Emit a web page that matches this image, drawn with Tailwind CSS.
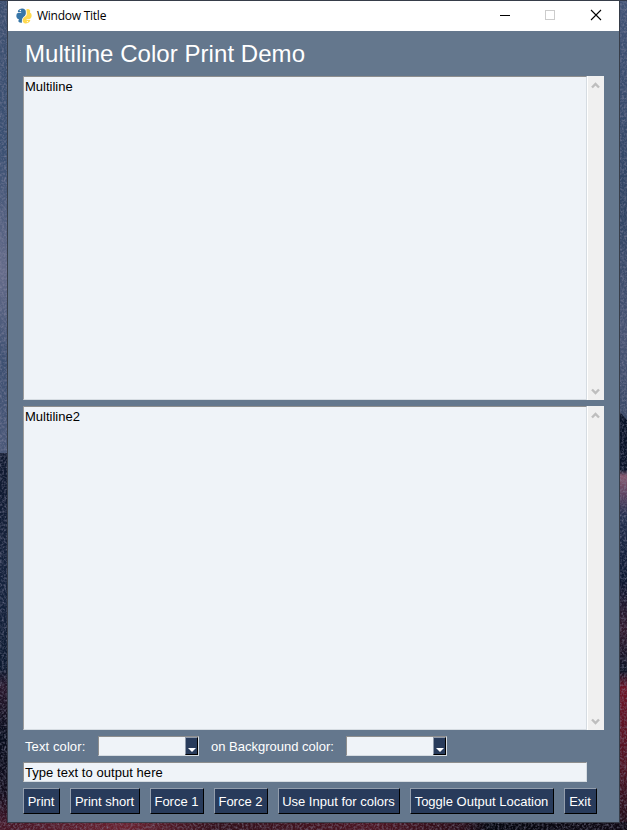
<!DOCTYPE html>
<html lang="en">
<head>
<meta charset="utf-8">
<title>Window Title</title>
<script src="https://cdn.jsdelivr.net/npm/@tailwindcss/browser@4"></script>
</head>
<body class="relative w-[627px] h-[830px] overflow-hidden bg-[#0b1428] font-['Liberation_Sans',Arial,sans-serif] text-[13px] leading-[16px]">
<!-- desktop wallpaper -->
<svg class="absolute inset-0" width="627" height="830" aria-hidden="true">
  <defs>
    <linearGradient id="sky" x1="0" y1="0" x2="0" y2="1"><stop offset="0" stop-color="#3d5070"/><stop offset=".33" stop-color="#3a5072"/><stop offset=".6" stop-color="#656c8a"/><stop offset=".8" stop-color="#3d5071"/><stop offset="1" stop-color="#4b5979"/></linearGradient>
    <linearGradient id="skyr" x1="0" y1="0" x2="0" y2="1"><stop offset="0" stop-color="#425476"/><stop offset=".5" stop-color="#304463"/><stop offset=".8" stop-color="#485473"/><stop offset="1" stop-color="#3a4a68"/></linearGradient>
    <linearGradient id="land" x1="0" y1="0" x2="0" y2="1"><stop offset="0" stop-color="#0e182e"/><stop offset=".35" stop-color="#16243e"/><stop offset=".57" stop-color="#0c1a30"/><stop offset=".62" stop-color="#27162a"/><stop offset=".75" stop-color="#070d1c"/><stop offset=".9" stop-color="#120d1c"/><stop offset="1" stop-color="#4a1628"/></linearGradient>
    <linearGradient id="landr" x1="0" y1="0" x2="0" y2="1"><stop offset="0" stop-color="#081226"/><stop offset=".14" stop-color="#0a142a"/><stop offset=".155" stop-color="#85566c"/><stop offset=".2" stop-color="#5c4260"/><stop offset=".25" stop-color="#24304f"/><stop offset=".4" stop-color="#0c1730"/><stop offset=".52" stop-color="#341b2e"/><stop offset=".62" stop-color="#0c1224"/><stop offset=".66" stop-color="#6d1426"/><stop offset=".85" stop-color="#501423"/><stop offset="1" stop-color="#1c0c18"/></linearGradient>
    <linearGradient id="ground" x1="0" y1="0" x2="1" y2="0"><stop offset="0" stop-color="#451524"/><stop offset=".2" stop-color="#6a2230"/><stop offset=".35" stop-color="#32101b"/><stop offset=".6" stop-color="#4d1522"/><stop offset=".74" stop-color="#280c17"/><stop offset=".78" stop-color="#04070f"/><stop offset="1" stop-color="#0e0813"/></linearGradient>
    <filter id="grain" x="0" y="0" width="1" height="1" color-interpolation-filters="sRGB"><feTurbulence type="fractalNoise" baseFrequency=".45" numOctaves="2" seed="4"/><feColorMatrix values="0 0 0 0 .55  0 0 0 0 .55  0 0 0 0 .65  1.2 0 0 0 -.48"/></filter>
  </defs>
  <rect width="8" height="453" fill="url(#sky)"/>
  <rect x="619" width="8" height="420" fill="url(#skyr)"/>
  <rect y="453" width="8" height="377" fill="url(#land)"/>
  <path d="M619 411l8 9v410h-8z" fill="url(#landr)"/>
  <rect y="822" width="627" height="8" fill="url(#ground)"/>
  <rect width="627" height="830" filter="url(#grain)"/>
  <rect width="627" height="1" fill="#30384a"/>
  <path d="M130 0h40M358 0h35" stroke="#6b6455" stroke-width="2"/>
</svg>

<main class="relative ml-[7px] w-[613px] h-[823px] border border-[#363d49] bg-[#64778d] flex flex-col">
  <header class="h-[30px] shrink-0 bg-white flex items-center pl-2">
    <svg width="16" height="16" viewBox="0 0 16 16" aria-hidden="true">
      <path d="M2.2 2.2Q4 .3 6.2.4Q9.600.6 9.800 3.500V6Q9.300 7.800 7.500 9Q6 10.200 5.900 12.500V14.800Q3.500 15 2.200 13.200L3 11.300Q.6 11 .3 8Q.2 5.400 2.200 4.800H5.200V4H1.800z" fill="#3776a8"/>
      <path d="M10.400 1.200Q13 .6 14.200 2.500L14 4.600Q15.800 5.400 15.700 8Q15.400 10.500 13.400 11.200H10.600V12H14.400L13.600 13.800Q12 15.600 9.600 15.500Q6.700 15.200 6.700 12.500Q6.700 10.400 8.300 9.300L10 8Q11 7 10.800 5.400z" fill="#ffd94f"/>
      <circle cx="4.400" cy="2.500" r=".75" fill="#fff"/><circle cx="11.400" cy="13.600" r=".7" fill="#fff"/>
    </svg>
    <h1 class="ml-[5px] font-['Open_Sans','Noto_Sans',sans-serif] text-[12px] leading-4 tracking-[-0.25px] text-black whitespace-nowrap">Window Title</h1>
    <svg class="ml-auto" width="138" height="30" shape-rendering="crispEdges" aria-hidden="true">
      <path d="M19 14.5h10" stroke="#000"/>
      <rect x="64.5" y="9.500" width="9" height="9" fill="none" stroke="#ccc"/>
      <path d="M110 9l10 10M120 9l-10 10" stroke="#000" stroke-width="1.1" shape-rendering="auto"/>
    </svg>
  </header>

  <section class="pl-[15px] flex flex-col">
    <h2 class="h-[45px] pt-[9px] pl-[2px] text-[24px] leading-[28px] tracking-[0.05px] text-white whitespace-nowrap">Multiline Color Print Demo</h2>

    <div class="flex h-[324px]">
      <div class="w-[564px] bg-[#eff3f8] border border-t-[#8e8e8e] border-l-[#9b9b9b] border-r-[#d6dce2] border-b-[#d6dce2] pl-px pt-[2px] text-black">Multiline</div>
      <div class="w-[17px] bg-[#f0f0f0] border-l border-white flex flex-col justify-between items-center">
        <svg width="16" height="17" aria-hidden="true"><path d="M4 11.500L7.500 8L11 11.500" fill="none" stroke="#bebebe" stroke-width="2.400"/></svg>
        <svg width="16" height="17" aria-hidden="true"><path d="M4 6.500L7.500 10L11 6.500" fill="none" stroke="#bebebe" stroke-width="2.400"/></svg>
      </div>
    </div>

    <div class="mt-[6px] flex h-[324px]">
      <div class="w-[564px] bg-[#eff3f8] border border-t-[#8e8e8e] border-l-[#9b9b9b] border-r-[#d6dce2] border-b-[#d6dce2] pl-px pt-[2px] text-black">Multiline2</div>
      <div class="w-[17px] bg-[#f0f0f0] border-l border-white flex flex-col justify-between items-center">
        <svg width="16" height="17" aria-hidden="true"><path d="M4 11.500L7.500 8L11 11.500" fill="none" stroke="#bebebe" stroke-width="2.400"/></svg>
        <svg width="16" height="17" aria-hidden="true"><path d="M4 6.500L7.500 10L11 6.500" fill="none" stroke="#bebebe" stroke-width="2.400"/></svg>
      </div>
    </div>

    <div class="mt-[6px] h-5 flex items-center text-white whitespace-nowrap">
      <span class="w-[75px] pl-[2px] pt-[2px] tracking-[0.1px]">Text color:</span>
      <div class="w-[101px] h-5 bg-[#eff3f8] border border-t-[#8e8e8e] border-l-[#8e8e8e] border-r-[#d6dce2] border-b-[#d6dce2] flex justify-end">
        <span class="w-[13px] h-[18px] bg-[#283b5b] border border-t-[#8e99aa] border-l-[#8e99aa] border-r-black border-b-black"><svg width="11" height="16" aria-hidden="true"><path d="M2 10h8l-4 4z" fill="#fff"/></svg></span>
      </div>
      <span class="w-[147px] pl-[12px] pt-[2px]">on Background color:</span>
      <div class="w-[101px] h-5 bg-[#eff3f8] border border-t-[#8e8e8e] border-l-[#8e8e8e] border-r-[#d6dce2] border-b-[#d6dce2] flex justify-end">
        <span class="w-[13px] h-[18px] bg-[#283b5b] border border-t-[#8e99aa] border-l-[#8e99aa] border-r-black border-b-black"><svg width="11" height="16" aria-hidden="true"><path d="M2 10h8l-4 4z" fill="#fff"/></svg></span>
      </div>
    </div>

    <div class="mt-[6px] w-[564px] h-5 bg-[#eff3f8] border border-t-[#8e8e8e] border-l-[#8e8e8e] border-r-[#d6dce2] border-b-[#d6dce2] pl-px pt-[2px] tracking-[0.05px] text-black whitespace-nowrap">Type text to output here</div>

    <div class="mt-[6px] h-[26px] flex gap-[10px] text-white whitespace-nowrap">
      <button class="w-[37px] pt-[2px] pr-px bg-[#283b5b] border border-t-[#929dac] border-l-[#929dac] border-r-black border-b-black">Print</button>
      <button class="w-[70px] pt-[2px] pr-px bg-[#283b5b] border border-t-[#929dac] border-l-[#929dac] border-r-black border-b-black">Print short</button>
      <button class="w-[54px] pt-[2px] pr-px bg-[#283b5b] border border-t-[#929dac] border-l-[#929dac] border-r-black border-b-black">Force 1</button>
      <button class="w-[54px] pt-[2px] pr-px bg-[#283b5b] border border-t-[#929dac] border-l-[#929dac] border-r-black border-b-black">Force 2</button>
      <button class="w-[122px] pt-[2px] pr-px bg-[#283b5b] border border-t-[#929dac] border-l-[#929dac] border-r-black border-b-black">Use Input for colors</button>
      <button class="w-[144px] pt-[2px] pr-px bg-[#283b5b] border border-t-[#929dac] border-l-[#929dac] border-r-black border-b-black">Toggle Output Location</button>
      <button class="w-[33px] pt-[2px] pr-px bg-[#283b5b] border border-t-[#929dac] border-l-[#929dac] border-r-black border-b-black">Exit</button>
    </div>
  </section>
</main>
</body>
</html>
